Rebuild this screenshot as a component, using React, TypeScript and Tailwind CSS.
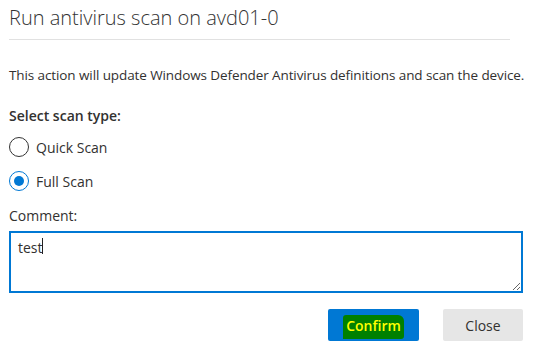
import { useState } from 'react';

function Radio({ label, checked, onClick }: { label: string; checked: boolean; onClick: () => void }) {
  return (
    <button type="button" onClick={onClick} className="flex h-[20px] items-center gap-[7px] text-left">
      <span
        className={`flex h-[20px] w-[20px] items-center justify-center rounded-full border ${
          checked ? 'border-[#0078d4]' : 'border-[#333333]'
        }`}
      >
        {checked && <span className="h-[10px] w-[10px] rounded-full bg-[#0078d4]" />}
      </span>
      <span className="text-[14px] text-[#323130]">{label}</span>
    </button>
  );
}

export default function App() {
  const [scan, setScan] = useState<'quick' | 'full'>('full');
  const [comment, setComment] = useState('test');

  return (
    <div className="h-[349px] w-[536px] bg-white px-[9px] font-['Open_Sans',sans-serif] text-[#323130]">
      {/* header */}
      <h1 className="pr-[17px] pt-[4px] text-[20px] font-light leading-[28px] text-[#333333]">
        Run antivirus scan on avd01-0
      </h1>
      <div className="mr-[17px] mt-[7px] h-px bg-[#e1e1e1]" />

      <p className="mt-[25px] whitespace-nowrap text-[13.5px] leading-[20px] tracking-[-0.1px]">
        This action will update Windows Defender Antivirus definitions and scan the device.
      </p>

      {/* scan type */}
      <p className="mt-[21px] text-[14px] font-semibold leading-[20px]">Select scan type:</p>
      <div className="mt-[11px] flex flex-col gap-[14px]">
        <Radio label="Quick Scan" checked={scan === 'quick'} onClick={() => setScan('quick')} />
        <Radio label="Full Scan" checked={scan === 'full'} onClick={() => setScan('full')} />
      </div>

      {/* comment */}
      <p className="mt-[15px] text-[14px] leading-[20px]">Comment:</p>
      <div className="relative mt-[5px] w-[514px]">
        <textarea
          value={comment}
          onChange={(e) => setComment(e.target.value)}
          className="block h-[62px] w-full resize-y border-2 border-[#0078d4] px-[7px] py-[5px] text-[14px] leading-[20px] outline-none"
        />
        {/* caret */}
        <span className="pointer-events-none absolute left-[33px] top-[7px] h-[16px] w-px bg-[#222222]" />
      </div>

      {/* actions */}
      <div className="mt-[16px] flex w-[514px] justify-end gap-[24px]">
        <button className="flex h-[32px] w-[91px] items-center justify-center rounded-[2px] bg-[#0078d4]">
          <span className="mt-[4px] rounded-tl-[3px] rounded-tr-[6px] rounded-br-[3px] bg-[#008000] px-[3px] pb-[3px] text-[14px] font-semibold text-[#ffff00]">
            Confirm
          </span>
        </button>
        <button className="h-[32px] w-[80px] rounded-[2px] bg-[#e6e6e6] text-[14px] text-[#323130]">Close</button>
      </div>
    </div>
  );
}
